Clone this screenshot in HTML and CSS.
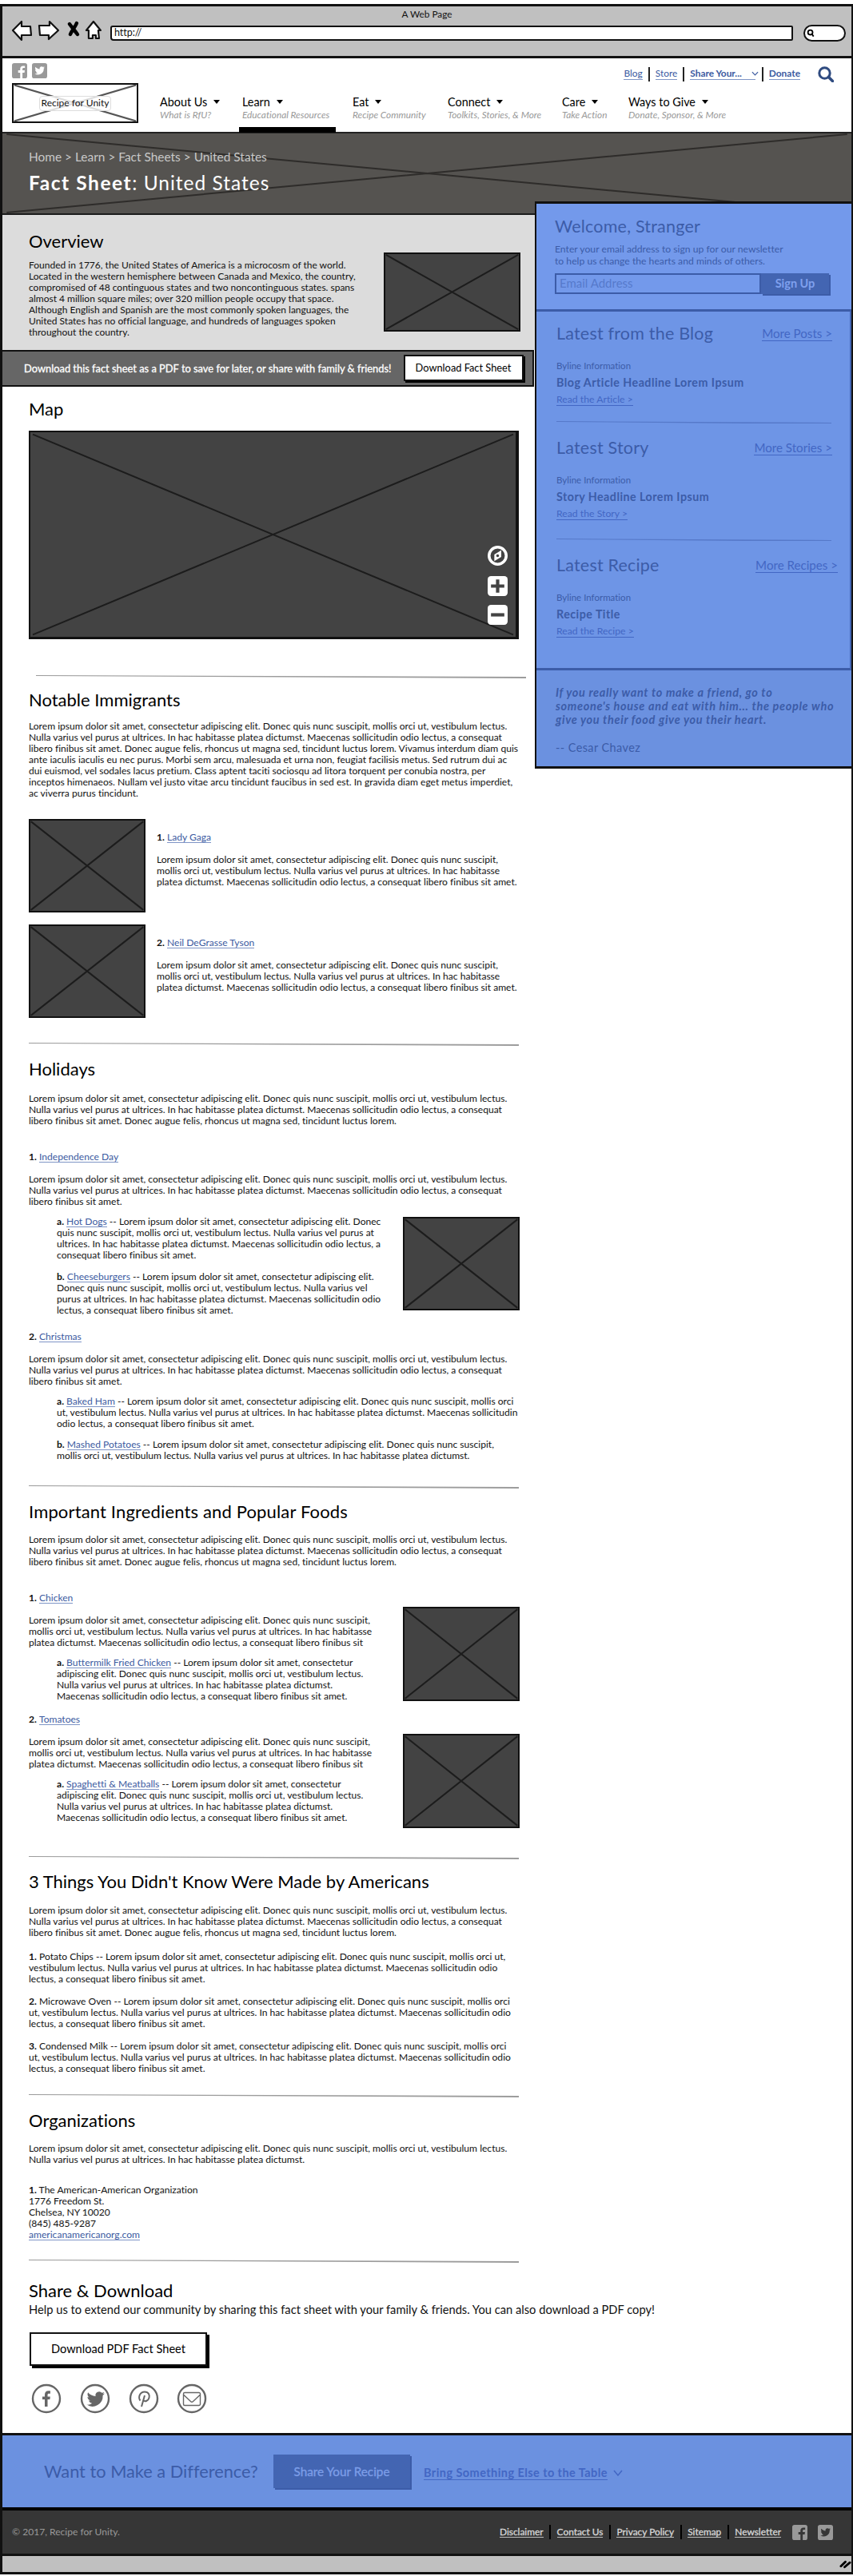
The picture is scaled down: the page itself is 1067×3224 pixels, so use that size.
FILE: index.html
```html
<!DOCTYPE html>
<html lang="en">
<head>
<meta charset="utf-8">
<title>Fact Sheet: United States</title>
<link rel="stylesheet" href="styles.css">
</head>
<body>
<svg class="defs" aria-hidden="true">
  <symbol id="fb" viewBox="0 0 20 20"><path fill-rule="evenodd" d="M3 0h14a3 3 0 0 1 3 3v14a3 3 0 0 1-3 3h-3.2v-7.4h2.6l.4-3h-3V7.9c0-.9.3-1.5 1.6-1.5H17V3.7c-.4 0-1.2-.1-2.3-.1-2.400 0-3.900 1.400-3.900 3.900v2.100H8.100v3h2.700V20H3a3 3 0 0 1-3-3V3a3 3 0 0 1 3-3z"/></symbol>
  <symbol id="tw" viewBox="0 0 20 20"><path fill-rule="evenodd" d="M3 0h14a3 3 0 0 1 3 3v14a3 3 0 0 1-3 3H3a3 3 0 0 1-3-3V3a3 3 0 0 1 3-3zM16.700 5.700c-.5.2-1 .4-1.500.4.6-.3 1-.8 1.200-1.500-.5.3-1.100.5-1.700.7a2.700 2.700 0 0 0-4.600 2.500C7.800 7.700 5.800 6.600 4.500 5a2.700 2.700 0 0 0 .8 3.600c-.4 0-.8-.1-1.200-.3 0 1.300.9 2.400 2.200 2.700-.4.1-.8.1-1.200 0 .3 1.100 1.300 1.800 2.500 1.900a5.500 5.500 0 0 1-4 1.100 7.700 7.700 0 0 0 11.900-6.900c.5-.4.900-.8 1.200-1.400z"/></symbol>
  <symbol id="x" viewBox="0 0 100 100" preserveAspectRatio="none"><path d="M.5 1 99.500 99M99.500 1 .5 99" fill="none" vector-effect="non-scaling-stroke"/></symbol>
</svg>

<div class="window">
  <header class="chrome">
    <div class="chrome-title">A Web Page</div>
    <div class="chrome-row">
      <svg class="chrome-icons" viewBox="0 0 114 27">
        <g fill="#fff" stroke="#111" stroke-width="2.200" stroke-linejoin="round">
          <path d="M2 13 13 2v6h11l1 11H13v6z"/>
          <path d="M35 7h13V2l11 11-12 11v-5H36z"/>
          <path d="m103 2 9 11h-3l1 10h-4v-4h-4v4h-5V13h-3z"/>
        </g>
        <path d="M73 5c3 4 7 9 10 13M82 4c-2 5-6 9-8 14" fill="none" stroke="#000" stroke-width="4.500" stroke-linecap="round"/>
      </svg>
      <div class="url">http://</div>
      <div class="find"><svg viewBox="0 0 12 12"><circle cx="5" cy="5" r="3.200" fill="none" stroke="#000" stroke-width="2"/><path d="m7 7 2.500 3.500" stroke="#000" stroke-width="2"/></svg></div>
    </div>
  </header>

  <div class="site-head">
    <div class="top-row">
      <div class="social"><svg><use href="#fb"/></svg><svg><use href="#tw"/></svg></div>
      <div class="top-links">
        <a>Blog</a><i></i><a>Store</a><i></i><a class="share">Share Your...<svg viewBox="0 0 10 6"><path d="m1 1 4 4 4-4" fill="none" stroke="#3b5a9f" stroke-width="1.300"/></svg></a><i></i><a class="b">Donate</a>
        <svg class="search" viewBox="0 0 20 20"><circle cx="8.500" cy="8.500" r="6.700" fill="none" stroke="#2f4b80" stroke-width="3"/><path d="m13.500 13.500 5 5" stroke="#2f4b80" stroke-width="3.600" stroke-linecap="round"/></svg>
      </div>
    </div>
    <div class="nav-row">
      <div class="logo"><svg><use href="#x"/></svg><span>Recipe for Unity</span></div>
      <nav>
        <div><b>About Us</b><em>What is RfU?</em></div>
        <div class="on"><b>Learn</b><em>Educational Resources</em></div>
        <div><b>Eat</b><em>Recipe Community</em></div>
        <div><b>Connect</b><em>Toolkits, Stories, &amp; More</em></div>
        <div><b>Care</b><em>Take Action</em></div>
        <div><b>Ways to Give</b><em>Donate, Sponsor, &amp; More</em></div>
      </nav>
    </div>
  </div>

  <div class="hero">
    <svg class="hero-x"><use href="#x"/></svg>
    <div class="crumbs">Home &gt; Learn &gt; Fact Sheets &gt; United States</div>
    <h1><strong>Fact Sheet</strong>: United States</h1>
  </div>

  <div class="columns">
    <main>
      <section class="overview">
        <div>
          <h2>Overview</h2>
          <p>Founded in 1776, the United States of America is a microcosm of the world.<br>Located in the western hemisphere between Canada and Mexico, the country,<br>compromised of 48 continguous states and two noncontinguous states. spans<br>almost 4 million square miles; over 320 million people occupy that space.<br>Although English and Spanish are the most commonly spoken languages, the<br>United States has no official language, and hundreds of languages spoken<br>throughout the country.</p>
        </div>
        <div class="pic"><svg><use href="#x"/></svg></div>
      </section>
      <section class="dl-bar"><span>Download this fact sheet as a PDF to save for later, or share with family &amp; friends!</span><button class="btn">Download Fact Sheet</button></section>

      <section class="map-sec">
        <h2>Map</h2>
        <div class="pic map"><svg><use href="#x"/></svg>
          <div class="map-tools">
            <svg viewBox="0 0 24 24"><circle cx="12" cy="12" r="10.300" fill="none" stroke="#fff" stroke-width="3.400"/><path fill="#fff" fill-rule="evenodd" d="M16.300 5.500v8L8 18.500v-8zM12 10.300a1.700 1.700 0 1 0 0 3.400 1.700 1.700 0 0 0 0-3.400z"/></svg>
            <svg viewBox="0 0 24 24"><rect width="24" height="24" rx="4" fill="#fff"/><path class="bar" d="M12 4v16M4 12h16"/></svg>
            <svg viewBox="0 0 24 24"><rect width="24" height="24" rx="4" fill="#fff"/><path class="bar" d="M4 12h16"/></svg>
          </div>
        </div>
      </section>

      <section class="immigrants">
        <hr class="inset">
        <h2>Notable Immigrants</h2>
        <p>Lorem ipsum dolor sit amet, consectetur adipiscing elit. Donec quis nunc suscipit, mollis orci ut, vestibulum lectus.<br>Nulla varius vel purus at ultrices. In hac habitasse platea dictumst. Maecenas sollicitudin odio lectus, a consequat<br>libero finibus sit amet. Donec augue felis, rhoncus ut magna sed, tincidunt luctus lorem. Vivamus interdum diam quis<br>ante iaculis iaculis eu nec purus. Morbi sem arcu, malesuada et urna non, feugiat facilisis metus. Sed rutrum dui ac<br>dui euismod, vel sodales lacus pretium. Class aptent taciti sociosqu ad litora torquent per conubia nostra, per<br>inceptos himenaeos. Nullam vel justo vitae arcu tincidunt faucibus in sed est. In gravida diam eget metus imperdiet,<br>ac viverra purus tincidunt.</p>
        <div class="person">
          <div class="pic"><svg><use href="#x"/></svg></div>
          <div><p><b>1.</b> <a>Lady Gaga</a></p><p>Lorem ipsum dolor sit amet, consectetur adipiscing elit. Donec quis nunc suscipit,<br>mollis orci ut, vestibulum lectus. Nulla varius vel purus at ultrices. In hac habitasse<br>platea dictumst. Maecenas sollicitudin odio lectus, a consequat libero finibus sit amet.</p></div>
        </div>
        <div class="person">
          <div class="pic"><svg><use href="#x"/></svg></div>
          <div><p><b>2.</b> <a>Neil DeGrasse Tyson</a></p><p>Lorem ipsum dolor sit amet, consectetur adipiscing elit. Donec quis nunc suscipit,<br>mollis orci ut, vestibulum lectus. Nulla varius vel purus at ultrices. In hac habitasse<br>platea dictumst. Maecenas sollicitudin odio lectus, a consequat libero finibus sit amet.</p></div>
        </div>
      </section>

      <section class="holidays">
        <hr>
        <h2>Holidays</h2>
        <p>Lorem ipsum dolor sit amet, consectetur adipiscing elit. Donec quis nunc suscipit, mollis orci ut, vestibulum lectus.<br>Nulla varius vel purus at ultrices. In hac habitasse platea dictumst. Maecenas sollicitudin odio lectus, a consequat<br>libero finibus sit amet. Donec augue felis, rhoncus ut magna sed, tincidunt luctus lorem.</p>
        <p class="item first"><b>1.</b> <a>Independence Day</a></p>
        <p class="desc">Lorem ipsum dolor sit amet, consectetur adipiscing elit. Donec quis nunc suscipit, mollis orci ut, vestibulum lectus.<br>Nulla varius vel purus at ultrices. In hac habitasse platea dictumst. Maecenas sollicitudin odio lectus, a consequat<br>libero finibus sit amet.</p>
        <div class="foods">
          <div>
            <p class="sub"><b>a.</b> <a>Hot Dogs</a> -- Lorem ipsum dolor sit amet, consectetur adipiscing elit. Donec<br>quis nunc suscipit, mollis orci ut, vestibulum lectus. Nulla varius vel purus at<br>ultrices. In hac habitasse platea dictumst. Maecenas sollicitudin odio lectus, a<br>consequat libero finibus sit amet.</p>
            <p class="sub second"><b>b.</b> <a>Cheeseburgers</a> -- Lorem ipsum dolor sit amet, consectetur adipiscing elit.<br>Donec quis nunc suscipit, mollis orci ut, vestibulum lectus. Nulla varius vel<br>purus at ultrices. In hac habitasse platea dictumst. Maecenas sollicitudin odio<br>lectus, a consequat libero finibus sit amet.</p>
          </div>
          <div class="pic"><svg><use href="#x"/></svg></div>
        </div>
        <p class="item"><b>2.</b> <a>Christmas</a></p>
        <p class="desc">Lorem ipsum dolor sit amet, consectetur adipiscing elit. Donec quis nunc suscipit, mollis orci ut, vestibulum lectus.<br>Nulla varius vel purus at ultrices. In hac habitasse platea dictumst. Maecenas sollicitudin odio lectus, a consequat<br>libero finibus sit amet.</p>
        <p class="sub"><b>a.</b> <a>Baked Ham</a> -- Lorem ipsum dolor sit amet, consectetur adipiscing elit. Donec quis nunc suscipit, mollis orci<br>ut, vestibulum lectus. Nulla varius vel purus at ultrices. In hac habitasse platea dictumst. Maecenas sollicitudin<br>odio lectus, a consequat libero finibus sit amet.</p>
        <p class="sub last"><b>b.</b> <a>Mashed Potatoes</a> -- Lorem ipsum dolor sit amet, consectetur adipiscing elit. Donec quis nunc suscipit,<br>mollis orci ut, vestibulum lectus. Nulla varius vel purus at ultrices. In hac habitasse platea dictumst.</p>
      </section>

      <section class="ingredients">
        <hr>
        <h2>Important Ingredients and Popular Foods</h2>
        <p>Lorem ipsum dolor sit amet, consectetur adipiscing elit. Donec quis nunc suscipit, mollis orci ut, vestibulum lectus.<br>Nulla varius vel purus at ultrices. In hac habitasse platea dictumst. Maecenas sollicitudin odio lectus, a consequat<br>libero finibus sit amet. Donec augue felis, rhoncus ut magna sed, tincidunt luctus lorem.</p>
        <div class="ingredient">
          <div>
            <p><b>1.</b> <a>Chicken</a></p>
            <p class="desc">Lorem ipsum dolor sit amet, consectetur adipiscing elit. Donec quis nunc suscipit,<br>mollis orci ut, vestibulum lectus. Nulla varius vel purus at ultrices. In hac habitasse<br>platea dictumst. Maecenas sollicitudin odio lectus, a consequat libero finibus sit</p>
            <p class="sub"><b>a.</b> <a>Buttermilk Fried Chicken</a> -- Lorem ipsum dolor sit amet, consectetur<br>adipiscing elit. Donec quis nunc suscipit, mollis orci ut, vestibulum lectus.<br>Nulla varius vel purus at ultrices. In hac habitasse platea dictumst.<br>Maecenas sollicitudin odio lectus, a consequat libero finibus sit amet.</p>
          </div>
          <div class="pic"><svg><use href="#x"/></svg></div>
        </div>
        <div class="ingredient two">
          <div>
            <p><b>2.</b> <a>Tomatoes</a></p>
            <p class="desc">Lorem ipsum dolor sit amet, consectetur adipiscing elit. Donec quis nunc suscipit,<br>mollis orci ut, vestibulum lectus. Nulla varius vel purus at ultrices. In hac habitasse<br>platea dictumst. Maecenas sollicitudin odio lectus, a consequat libero finibus sit</p>
            <p class="sub"><b>a.</b> <a>Spaghetti &amp; Meatballs</a> -- Lorem ipsum dolor sit amet, consectetur<br>adipiscing elit. Donec quis nunc suscipit, mollis orci ut, vestibulum lectus.<br>Nulla varius vel purus at ultrices. In hac habitasse platea dictumst.<br>Maecenas sollicitudin odio lectus, a consequat libero finibus sit amet.</p>
          </div>
          <div class="pic"><svg><use href="#x"/></svg></div>
        </div>
      </section>

      <section class="things">
        <hr>
        <h2>3 Things You Didn't Know Were Made by Americans</h2>
        <p>Lorem ipsum dolor sit amet, consectetur adipiscing elit. Donec quis nunc suscipit, mollis orci ut, vestibulum lectus.<br>Nulla varius vel purus at ultrices. In hac habitasse platea dictumst. Maecenas sollicitudin odio lectus, a consequat<br>libero finibus sit amet. Donec augue felis, rhoncus ut magna sed, tincidunt luctus lorem.</p>
        <p class="thing one"><b>1.</b> Potato Chips -- Lorem ipsum dolor sit amet, consectetur adipiscing elit. Donec quis nunc suscipit, mollis orci ut,<br>vestibulum lectus. Nulla varius vel purus at ultrices. In hac habitasse platea dictumst. Maecenas sollicitudin odio<br>lectus, a consequat libero finibus sit amet.</p>
        <p class="thing"><b>2.</b> Microwave Oven -- Lorem ipsum dolor sit amet, consectetur adipiscing elit. Donec quis nunc suscipit, mollis orci<br>ut, vestibulum lectus. Nulla varius vel purus at ultrices. In hac habitasse platea dictumst. Maecenas sollicitudin odio<br>lectus, a consequat libero finibus sit amet.</p>
        <p class="thing"><b>3.</b> Condensed Milk -- Lorem ipsum dolor sit amet, consectetur adipiscing elit. Donec quis nunc suscipit, mollis orci<br>ut, vestibulum lectus. Nulla varius vel purus at ultrices. In hac habitasse platea dictumst. Maecenas sollicitudin odio<br>lectus, a consequat libero finibus sit amet.</p>
      </section>

      <section class="orgs">
        <hr>
        <h2>Organizations</h2>
        <p>Lorem ipsum dolor sit amet, consectetur adipiscing elit. Donec quis nunc suscipit, mollis orci ut, vestibulum lectus.<br>Nulla varius vel purus at ultrices. In hac habitasse platea dictumst.</p>
        <p class="address"><b>1.</b> The American-American Organization<br>1776 Freedom St.<br>Chelsea, NY 10020<br>(845) 485-9287<br><a>americanamericanorg.com</a></p>
        <hr class="end">
      </section>
    </main>

    <aside>
      <section class="welcome">
        <h2>Welcome, Stranger</h2>
        <p>Enter your email address to sign up for our newsletter<br>to help us change the hearts and minds of others.</p>
        <div class="signup"><div class="field">Email Address</div><div class="go">Sign Up</div></div>
      </section>
      <section class="latest">
        <div class="feed"><div class="feed-head"><h2>Latest from the Blog</h2><a>More Posts &gt;</a></div><div class="by">Byline Information</div><div class="headline">Blog Article Headline Lorem Ipsum</div><a class="read">Read the Article &gt;</a></div>
        <hr>
        <div class="feed story"><div class="feed-head"><h2>Latest Story</h2><a>More Stories &gt;</a></div><div class="by">Byline Information</div><div class="headline">Story Headline Lorem Ipsum</div><a class="read">Read the Story &gt;</a></div>
        <hr>
        <div class="feed"><div class="feed-head wide"><h2>Latest Recipe</h2><a>More Recipes &gt;</a></div><div class="by">Byline Information</div><div class="headline">Recipe Title</div><a class="read">Read the Recipe &gt;</a></div>
      </section>
      <section class="quote">
        <blockquote>If you really want to make a friend, go to<br>someone's house and eat with him... the people who<br>give you their food give you their heart.</blockquote>
        <cite>-- Cesar Chavez</cite>
      </section>
    </aside>
  </div>

  <section class="share-sec">
    <h2>Share &amp; Download</h2>
    <div class="help">Help us to extend our community by sharing this fact sheet with your family &amp; friends. You can also download a PDF copy!</div>
    <button class="btn big">Download PDF Fact Sheet</button>
    <div class="rings">
      <svg viewBox="0 0 38 38"><circle cx="19" cy="19" r="17"/><path class="f" d="M17 29v-9h-3v-3.500h3V14c0-3 1.700-4.700 4.500-4.700h2.400v3.400h-1.700c-1.300 0-1.700.6-1.700 1.600v2.200h3.300l-.4 3.500h-2.900v9z"/></svg>
      <svg viewBox="0 0 38 38"><circle cx="19" cy="19" r="17"/><path class="f" d="M31 12.500c-.8.4-1.700.6-2.600.7.900-.6 1.600-1.400 2-2.500-.9.500-1.900.9-2.900 1.100a4.600 4.600 0 0 0-7.900 4.200c-3.800-.2-7.200-2-9.500-4.800-1.200 2.100-.6 4.800 1.400 6.200-.7 0-1.400-.2-2.100-.6 0 2.200 1.600 4.200 3.700 4.600-.7.200-1.400.2-2.100.1.600 1.800 2.300 3.200 4.300 3.200-1.900 1.500-4.300 2.200-6.800 1.900A13 13 0 0 0 28.600 15c.9-.7 1.700-1.500 2.400-2.500z"/></svg>
      <svg viewBox="0 0 38 38"><circle cx="19" cy="19" r="17"/><path class="s" d="M14.500 21.500c-3-3.500-1-11 5.500-11 5 0 6.500 4 5.500 7.500s-5 5.500-7 3M20 15l-4 14"/></svg>
      <svg viewBox="0 0 38 38"><circle cx="19" cy="19" r="17"/><path class="t" d="M10 11.500h18a1.500 1.500 0 0 1 1.500 1.500v13a1.500 1.500 0 0 1-1.500 1.500H10A1.500 1.500 0 0 1 8.500 26V13a1.500 1.500 0 0 1 1.500-1.500zM9 14.500l8.500 8q1.500 1.500 3 0l8.500-8"/></svg>
    </div>
  </section>

  <section class="cta">
    <span class="want">Want to Make a Difference?</span>
    <span class="cta-btn">Share Your Recipe</span>
    <a>Bring Something Else to the Table</a>
    <svg viewBox="0 0 12 8"><path d="m1 1 5 6 5-6" fill="none" stroke="#4367c4" stroke-width="1.500"/></svg>
  </section>

  <footer>
    <span class="copy">© 2017, Recipe for Unity.</span>
    <div class="foot-links"><a>Disclaimer</a><i></i><a>Contact Us</a><i></i><a>Privacy Policy</a><i></i><a>Sitemap</a><i></i><a>Newsletter</a></div>
    <svg><use href="#fb"/></svg><svg><use href="#tw"/></svg>
  </footer>
  <div class="status"><svg viewBox="0 0 16 12"><path d="M2 9 8 3M7 10l7-6" stroke="#000" stroke-width="3" stroke-linecap="round"/></svg></div>
</div>
</body>
</html>
```
FILE: styles.css
```css
* { box-sizing: border-box; }
body { margin: 0; background: #fff; font: 12.08px/14px Lato, "Noto Sans", sans-serif; font-variant-ligatures: none; color: #111; white-space: nowrap; }
h1, h2, p, blockquote { margin: 0; font-weight: 400; }
svg { display: block; }
.defs { position: absolute; width: 0; height: 0; }
a { color: #3b5a9f; border-bottom: 1px solid #7f95c6; display: inline-block; line-height: 12px; }
i { width: 2px; height: 18px; background: #222; }

.window { width: 1067px; margin-top: 5px; border: 3px solid #111; border-right-width: 2px; }

/* browser chrome */
.chrome { height: 65px; background: #c0c0c0; border-bottom: 3px solid #111; }
.chrome-title { padding-top: 3px; text-align: center; font-size: 11.8px; color: #111; }
.chrome-row { display: flex; align-items: center; padding: 0 7px 0 11px; }
.chrome-icons { width: 114px; height: 27px; }
.url { width: 855px; height: 19px; margin: 6px 0 0 10px; border: 2px solid #111; border-radius: 3px 2px 2px 4px; background: #fff; padding-left: 3px; line-height: 14px; font-size: 12.5px; }
.find { width: 53px; height: 21px; margin: 6px 0 0 13px; border: 2px solid #111; border-radius: 14px; background: #fff; padding: 3px 2px; }
.find svg { width: 11px; height: 11px; }

/* site header */
.site-head { height: 94px; padding: 0 22px 0 12px; border-bottom: 2px solid #222; }
.top-row { display: flex; justify-content: space-between; height: 31px; padding-top: 6px; }
.social { display: flex; gap: 6px; fill: #999; }
.social svg { width: 19px; height: 19px; }
.top-links { display: flex; align-items: flex-start; gap: 7px; font-size: 11.9px; padding-top: 5px; }
.top-links a { height: 15px; line-height: 14px; margin-top: 1px; }
.top-links a.b, .top-links a.share { font-weight: 700; }
.top-links a.share { display: flex; gap: 12px; align-items: center; margin-right: 1px; }
.top-links a:first-child { margin-left: -3px; }
.share svg { width: 9px; height: 6px; margin-right: -4px; }
.top-links .search { width: 20px; height: 20px; margin: -1px 0 0 15px; }
.nav-row { display: flex; }
.logo { width: 158px; height: 50px; border: 2px solid #111; margin-right: 28px; display: grid; place-items: center; }
.logo > * { grid-area: 1 / 1; }
.logo svg { width: 100%; height: 100%; stroke: #555; stroke-width: 2.200; }
.logo span { background: rgba(255,255,255,.8); border: 1px solid #ddd; border-radius: 4px; padding: 1px 2px 2px; font-size: 12px; z-index: 1; }
nav { display: grid; grid-template-columns: 103px 138px 119px 143px 83px auto; padding-top: 14px; margin-left: -1px; }
nav > div { position: relative; }
nav b { display: flex; align-items: center; gap: 8px; font-weight: 400; font-size: 14.4px; line-height: 19px; color: #000; }
nav b::after { content: ""; border: 4.500px solid transparent; border-top: 5.500px solid #000; border-bottom: 0; }
nav em { display: block; font-size: 11.8px; line-height: 14px; color: #999; }
nav .on::after { content: ""; position: absolute; left: -4px; width: 121px; top: 41px; height: 7px; background: #000; }

/* hero */
.hero { display: grid; height: 102px; background: #555350; border-bottom: 2px solid #1c1c1c; align-content: start; padding: 19px 0 0 33px; position: relative; }
.hero-x { position: absolute; inset: 0; width: 100%; height: 100%; stroke: #2e2c2a; stroke-width: 2; }
.crumbs { z-index: 1; color: #c8c8c8; font-size: 15.45px; line-height: 20px; }
.hero h1 { z-index: 1; color: #fff; font-size: 24.500px; line-height: 34px; margin-top: 6px; letter-spacing: 1px; }
.hero strong { letter-spacing: 1.550px; }

/* content */
.columns { display: flex; align-items: flex-start; }
main { width: 666px; }
h2 { font-size: 22px; line-height: 26px; color: #000; }
main > section { padding-left: 33px; }
.pic { background: #434343; border: 2px solid #111; width: 146px; }
.pic svg { width: 100%; height: 100%; stroke: #1c1c1c; stroke-width: 2; }
hr { border: 0; margin: 0; width: 613px; height: 4px; background: #9c9c9c; clip-path: polygon(0 0, 100% 2px, 100% 4px, 0 1px); }
main > .overview { display: flex; height: 169px; background: #dcdcdc; padding: 20px 0 0 33px; }
.overview > div:first-child { width: 444px; }
.overview p { margin-top: 10px; font-size: 12px; }
.overview .pic { width: 171px; height: 99px; margin-top: 27px; }
main > .dl-bar { display: flex; align-items: center; height: 46px; background: #666; border: 2px solid #111; border-left: 0; padding-left: 27px; color: #fff; font-size: 12.87px; width: 665px; }
.dl-bar span { -webkit-text-stroke: .3px #fff; }
.btn { font: 12.8px/14px Lato, sans-serif; color: #000; background: #fff; border: 2px solid #111; box-shadow: 2px 2px 0 #000; padding: 0; width: 150px; height: 33px; margin: 0 0 2px 15px; }
.map-sec h2 { margin-top: 15px; }
.map { width: 613px; height: 261px; margin-top: 14px; position: relative; border-right-width: 4px; border-bottom-width: 3px; }
.pic .map-tools { position: absolute; right: 10px; bottom: 15px; display: grid; gap: 11px; }
.map-tools svg { width: 25px; height: 25px; stroke-width: 0; }
.map-tools svg:first-child { margin-bottom: 2px; }
.map-tools .bar { stroke: #434343; stroke-width: 4; }
.immigrants hr { margin-top: 45px; }
.immigrants hr.inset { margin-left: 9px; }
.immigrants h2 { margin: 14px 0 13px; }
.person { display: flex; gap: 14px; margin-top: 25px; }
.person + .person { margin-top: 15px; }
.person .pic { height: 117px; }
.person p { margin-top: 14px; }
.person p:first-child { margin-top: 16px; }
.holidays hr { margin-top: 31px; }
.holidays h2 { margin: 16px 0 17px; }
.item { margin-top: 19px; }
.item.first { margin-top: 31px; }
.desc { margin-top: 14px; }
.sub { margin: 11px 0 0 35px; }
.sub.second { margin-top: 13px; }
.sub.last { margin-top: 12px; }
.foods, .ingredient { display: flex; justify-content: space-between; width: 613.500px; }
.foods .pic { height: 117px; margin-top: 12px; }
.ingredients hr { margin-top: 30px; }
.ingredients h2 { margin: 16px 0 15px; letter-spacing: .15px; }
.ingredient { margin-top: 31px; }
.ingredient .pic { height: 118px; margin-top: 18px; }
.ingredient.two { margin-top: 15px; }
.ingredient.two .pic { margin-top: 25px; }
.things hr { margin-top: 35px; }
.things h2 { margin: 15px 0 16px; }
.thing { margin-top: 14px; }
.thing.one { margin-top: 16px; }
.orgs hr { margin-top: 25px; }
.orgs h2 { margin: 16px 0 15px; }
.address { margin-top: 24px; }
.orgs hr.end { margin-top: 24px; }

/* sidebar */
aside { width: 398px; height: 710px; margin: -17px -2px 0 0; position: relative; z-index: 2; border: 3px solid #111; border-left-width: 2px; border-right-width: 2px; background: #6b91e0; color: #3c5ca8; }
aside h2 { color: #3c5ca8; font-size: 21.500px; letter-spacing: .2px; }
aside hr { width: 344px; height: 3px; background: #5679c9; }
aside a { color: #4367c4; border-color: #4367c4; }
.welcome { height: 135px; background: #7399eb; border-bottom: 3px solid #3c5ca8; padding: 15px 0 0 23px; }
.welcome p { margin-top: 9px; font-size: 12.200px; line-height: 14.500px; }
.signup { display: flex; margin-top: 8px; }
.field { width: 258px; height: 26px; border: 2px solid #3c5ca8; padding-left: 4px; font-size: 15px; line-height: 21px; color: #5679cb; }
.go { width: 85px; height: 26px; background: #4365b2; box-shadow: 2px 2px 0 #3c5ca8; color: #7fa0ee; font-size: 14.500px; font-weight: 700; line-height: 25px; text-align: center; }
.latest { height: 449px; background: #6e95e6; border-bottom: 3px solid #3c5ca8; border-right: 2px solid #4365b2; padding: 14px 0 0 25px; }
.feed-head { display: flex; justify-content: space-between; align-items: flex-start; width: 345px; }
.feed-head.wide { width: 352px; }
.feed-head a { font-size: 15.140px; line-height: 17px; margin-top: 5px; }
.by { font-size: 11.500px; margin-top: 21px; }
.headline { font-size: 14.300px; font-weight: 700; line-height: 18px; letter-spacing: .46px; margin-top: 5px; }
.feed { height: 123px; }
.feed.story { height: 127px; }
.latest hr { margin: 0 0 17px; }
.read { font-size: 12.250px; margin-top: 5px; line-height: 14px; }
.quote { padding: 19px 0 0 24px; font-size: 14px; line-height: 17px; }
blockquote { font-weight: 700; font-style: italic; font-size: 14.500px; letter-spacing: .66px; }
cite { display: block; font-style: normal; margin-top: 18px; letter-spacing: .4px; font-size: 14.500px; }

/* share and footer */
.share-sec { padding: 22px 0 24px 33px; height: 213px; }
.help { margin-top: 2px; font-size: 14.690px; line-height: 18px; }
.btn.big { display: block; width: 222px; height: 42px; margin: 19px 0 0 1px; font-size: 14.590px; box-shadow: 3px 3px 0 #000; }
.rings { display: flex; gap: 22.800px; margin: 22px 0 0 3px; }
.rings svg { width: 38px; height: 38px; fill: none; stroke: #666; stroke-width: 2.400; }
.rings .f { fill: #666; stroke: none; }
.rings .s { stroke-width: 2; }
.rings .t { stroke-width: 1.400; }
.cta { display: flex; align-items: center; height: 97px; background: #6b91e0; border-top: 3px solid #111; border-bottom: 4px solid #000; padding-left: 52px; color: #3c5ca8; }
.want { font-size: 21.770px; width: 287px; }
.cta-btn { width: 171px; height: 42px; background: #4365b2; box-shadow: 2px 2px 0 #3c5ca8; color: #7d9ee8; font-size: 15.300px; line-height: 42px; text-align: center; -webkit-text-stroke: .3px; }
.cta a { margin: 3px 7px 0 17px; color: #4367c4; border-color: #4367c4; font-weight: 700; font-size: 14.500px; letter-spacing: .43px; line-height: 17px; }
.cta svg { width: 12px; height: 8px; margin-top: 3px; }
footer { display: flex; align-items: center; height: 57px; background: #363636; border-bottom: 3px solid #111; padding: 0 23px 0 12px; fill: #999; }
.copy { color: #999; flex: 1; }
footer svg { width: 19px; height: 19px; margin-left: 13px; }
footer svg:nth-of-type(1) { margin-left: 14px; }
.foot-links { display: flex; align-items: center; gap: 7.500px; }
.foot-links a { color: #d8d8d8; border-color: #bbb; font-size: 11.900px; line-height: 13px; -webkit-text-stroke: .3px; }
.foot-links i { background: #000; }
.status { display: flex; justify-content: flex-end; align-items: center; height: 20px; background: #c0c0c0; }
.status svg { width: 15px; height: 12px; }
```
